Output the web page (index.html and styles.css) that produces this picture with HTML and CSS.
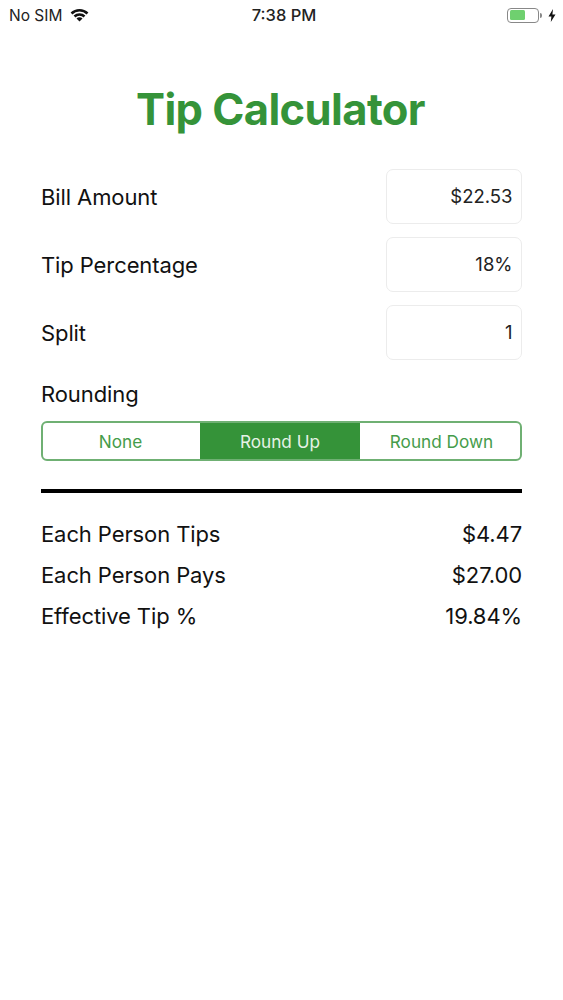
FILE: index.html
```html
<!DOCTYPE html>
<html lang="en">
<head>
    <meta charset="UTF-8">
    <meta name="viewport" content="width=device-width, initial-scale=1.0">
    <title>Tip Calculator</title>
    <link rel="stylesheet" href="styles.css">
</head>
<body>
    <div class="status-bar">
        <div class="status-left">
            <span>No SIM</span>
            <svg class="wifi" width="19" height="14" viewBox="0 0 19 14">
                <path d="M0.6 4.6 A12.6 12.6 0 0 1 18.4 4.6 L16.6 6.5 A10 10 0 0 0 2.4 6.5 Z" fill="#111"/>
                <path d="M3.6 7.6 A8.4 8.4 0 0 1 15.4 7.6 L13.6 9.5 A5.8 5.8 0 0 0 5.4 9.5 Z" fill="#111"/>
                <path d="M6.5 10.5 A4.2 4.2 0 0 1 12.5 10.5 L9.5 13.6 Z" fill="#111"/>
            </svg>
        </div>
        <div class="status-time">7:38 PM</div>
        <div class="status-right">
            <div class="battery"><div class="battery-level"></div></div>
            <div class="battery-cap"></div>
            <svg class="bolt" width="8" height="13" viewBox="0 0 8 13">
                <path d="M5 0 L0.5 7.4 H3.4 L2.8 13 L7.5 5.4 H4.4 Z" fill="#111"/>
            </svg>
        </div>
    </div>

    <div class="app">
        <h1>Tip Calculator</h1>

        <div class="field-row">
            <label>Bill Amount</label>
            <div class="field">$22.53</div>
        </div>
        <div class="field-row">
            <label>Tip Percentage</label>
            <div class="field">18%</div>
        </div>
        <div class="field-row">
            <label>Split</label>
            <div class="field">1</div>
        </div>

        <div class="rounding-label">Rounding</div>
        <div class="segmented">
            <div class="segment first">None</div>
            <div class="segment active">Round Up</div>
            <div class="segment last">Round Down</div>
        </div>

        <div class="divider"></div>

        <div class="result-row"><span>Each Person Tips</span><span>$4.47</span></div>
        <div class="result-row"><span>Each Person Pays</span><span>$27.00</span></div>
        <div class="result-row"><span>Effective Tip %</span><span>19.84%</span></div>
    </div>
</body>
</html>
```

FILE: styles.css
```css
:root {
    --green: #359339;
    --text: #111111;
}

html, body {
    height: 100%;
}

body {
    font-family: Inter, "Liberation Sans", sans-serif;
    margin: 0;
    background: #ffffff;
    color: var(--text);
    overflow: hidden;
}

.status-bar {
    height: 30px;
    padding: 0 7px 0 9px;
    display: grid;
    grid-template-columns: 1fr auto 1fr;
    align-items: center;
    font-size: 15.5px;
    color: #222;
}

.status-left {
    display: flex;
    align-items: center;
    gap: 8px;
}

.status-time {
    font-size: 16.5px;
    font-weight: 500;
    margin-left: 3px;
}

.status-right {
    display: flex;
    align-items: center;
    justify-content: flex-end;
}

.battery {
    width: 32px;
    height: 15px;
    box-sizing: border-box;
    border: 1px solid #888;
    border-radius: 4px;
    padding: 1.5px;
}

.battery-level {
    width: 56%;
    height: 100%;
    background: #6fd06f;
    border-radius: 1.5px;
}

.battery-cap {
    width: 2px;
    height: 5px;
    margin-left: 1px;
    background: #888;
    border-radius: 0 2px 2px 0;
}

.bolt {
    margin-left: 6px;
}

.app {
    padding: 0 41px;
}

h1 {
    margin: 0 2px 0 0;
    padding-top: 53px;
    box-sizing: border-box;
    height: 139px;
    line-height: 53px;
    font-size: 43.5px;
    font-weight: 700;
    letter-spacing: -0.6px;
    text-align: center;
    color: var(--green);
}

.field-row {
    display: flex;
    justify-content: space-between;
    align-items: center;
    height: 55px;
    margin-bottom: 13px;
    font-size: 22px;
    letter-spacing: -0.1px;
}

.field {
    width: 136px;
    height: 55px;
    box-sizing: border-box;
    padding: 0 8.5px 2px;
    border: 1px solid #ececec;
    border-radius: 7px;
    display: flex;
    align-items: center;
    justify-content: flex-end;
    font-size: 18.5px;
    letter-spacing: 0;
    color: #222;
}

.rounding-label {
    font-size: 22px;
    letter-spacing: -0.1px;
    line-height: 28px;
    margin-top: 20px;
    margin-bottom: 13px;
}

.segmented {
    display: grid;
    grid-template-columns: 157px 160px 1fr;
    height: 40px;
    box-sizing: border-box;
    border: 2px solid #6fb073;
    border-radius: 6px;
    overflow: hidden;
    margin-bottom: 28px;
}

.segment {
    display: flex;
    align-items: center;
    justify-content: center;
    font-size: 17.2px;
    color: #459c4a;
}

.segment.first {
    padding-right: 2px;
}

.segment.last {
    padding-left: 3px;
}

.segment.active {
    background: var(--green);
    color: #e6f2e6;
}

.divider {
    height: 4px;
    background: #000;
    margin-bottom: 20px;
}

.result-row {
    display: flex;
    justify-content: space-between;
    align-items: center;
    height: 41px;
    font-size: 22px;
    letter-spacing: -0.1px;
}
```
